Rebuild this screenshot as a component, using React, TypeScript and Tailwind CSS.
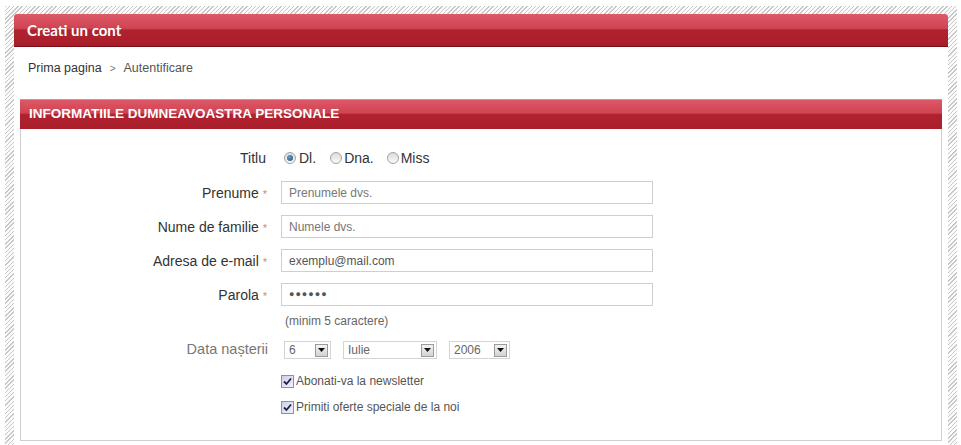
const arial = "font-['Liberation_Sans',Arial,sans-serif]";

function Radio({ checked }: { checked?: boolean }) {
  return (
    <span className="relative inline-flex h-[12px] w-[12px] items-center justify-center rounded-full border border-[#a3a3a3] bg-[linear-gradient(#dcdcdc,#fafafa)]">
      {checked && (
        <span className="h-[6px] w-[6px] rounded-full bg-[radial-gradient(circle_at_35%_35%,#6a9cc4,#1d4f7c)]" />
      )}
    </span>
  );
}

function Checkbox() {
  return (
    <span className="inline-flex h-[13px] w-[13px] items-center justify-center border border-[#8e8fa8] bg-[linear-gradient(135deg,#cfcfee,#f0f0fb)]">
      <svg width="9" height="9" viewBox="0 0 9 9">
        <path d="M1 4.5 L3.5 7 L8 1.5" stroke="#1f2440" strokeWidth="1.8" fill="none" />
      </svg>
    </span>
  );
}

function Select({ value, width }: { value: string; width: string }) {
  return (
    <div className={`flex h-[18px] items-center justify-between border border-[#d4d4d4] bg-white pl-[4px] pr-[2px] ${width}`}>
      <span className="text-[12px] leading-none text-[#666]">{value}</span>
      <span className="flex h-[13px] w-[13px] items-center justify-center border border-[#9a9a9a] bg-[linear-gradient(#f4f4f4,#d2d2d2)]">
        <svg width="7" height="4" viewBox="0 0 7 4">
          <path d="M0 0 H7 L3.5 4 Z" fill="#111" />
        </svg>
      </span>
    </div>
  );
}

function Field({ label, value, dark }: { label: string; value: string; dark?: boolean }) {
  return (
    <div className="flex h-[23px] items-center">
      <div className="w-[246px] pt-[2px] text-right text-[14px] text-[#333]">
        {label} <span className="text-[11px] text-[#c98a8a]">*</span>
      </div>
      <div className="ml-[14px] flex h-[23px] w-[372px] items-center border border-[#cfcfcf] bg-white px-[7px] pt-[1px]">
        <span className={`text-[12px] ${dark ? "text-[#555]" : "text-[#777]"}`}>{value}</span>
      </div>
    </div>
  );
}

export default function App() {
  return (
    <div className={`h-[445px] w-[961px] overflow-hidden bg-white pl-[5px] pt-[6px] ${arial}`}>
      <div className="w-[952px] bg-[repeating-linear-gradient(135deg,#c8c8c8_0px,#c8c8c8_1px,#fbfbfb_1px,#fbfbfb_3px)] px-[9px] pt-[8px] pb-[20px]">
        <div className="w-[934px] bg-white pb-[20px]">
          {/* page title */}
          <div className="flex h-[33px] items-center rounded-t-[3px] border-b border-[#7a0f19] bg-[linear-gradient(#dd5a68,#cf4352_45%,#b1222f_50%,#a91d2b)] pl-[13px]">
            <span className="font-['Lato',sans-serif] text-[15px] font-bold text-white">Creati un cont</span>
          </div>

          <div className="flex h-[42px] items-center pl-[14px] pt-[1px] text-[12.5px] text-[#333]">
            <span>Prima pagina</span>
            <span className="mx-[8px] text-[10px] text-[#777]">&gt;</span>
            <span className="text-[#555]">Autentificare</span>
          </div>

          <div className="ml-[6px] mt-[10px] w-[922px] border border-t-0 border-[#cfcfcf] pb-[25px]">
            <div className="-mx-px flex h-[30px] items-center border-t border-[#e58891] bg-[linear-gradient(#dd5867,#cf4352_45%,#b1222f_50%,#aa1e2c)] pl-[9px]">
              <span className="text-[13.5px] font-bold text-white">INFORMATIILE DUMNEAVOASTRA PERSONALE</span>
            </div>

            <div className="mt-[19px] flex h-[20px] items-center text-[14px] text-[#333]">
              <div className="w-[245px] text-right">Titlu</div>
              <div className="ml-[18px] flex items-center">
                <Radio checked />
                <span className="ml-[3px]">Dl.</span>
                <span className="ml-[14px] flex items-center">
                  <Radio />
                  <span className="ml-[2px]">Dna.</span>
                </span>
                <span className="ml-[13px] flex items-center">
                  <Radio />
                  <span className="ml-[2px]">Miss</span>
                </span>
              </div>
            </div>

            <div className="mt-[13px] flex flex-col gap-[11px]">
              <Field label="Prenume" value="Prenumele dvs." />
              <Field label="Nume de familie" value="Numele dvs." />
              <Field label="Adresa de e-mail" value="exemplu@mail.com" dark />
              <div className="flex h-[23px] items-center">
                <div className="w-[246px] pt-[2px] text-right text-[14px] text-[#333]">
                  Parola <span className="text-[11px] text-[#c98a8a]">*</span>
                </div>
                <div className="ml-[14px] flex h-[23px] w-[372px] items-center border border-[#cfcfcf] bg-white px-[7px]">
                  <span className="text-[9px] tracking-[1px] text-[#555]">●●●●●●</span>
                </div>
              </div>
            </div>

            <div className="ml-[264px] mt-[7px] h-[16px] text-[12px] leading-[16px] text-[#666]">(minim 5 caractere)</div>

            <div className="mt-[12px] flex h-[18px] items-center">
              <div className="w-[247px] text-right text-[14.5px] text-[#777]">Data nașterii</div>
              <div className="ml-[16px] flex items-center gap-[12px]">
                <Select value="6" width="w-[47px]" />
                <Select value="Iulie" width="w-[94px]" />
                <Select value="2006" width="w-[61px]" />
              </div>
            </div>

            <div className="ml-[260px] mt-[14px] flex h-[16px] items-center gap-[2px] text-[12px] text-[#555]">
              <Checkbox />
              <span>Abonati-va la newsletter</span>
            </div>
            <div className="ml-[260px] mt-[10px] flex h-[16px] items-center gap-[2px] text-[12px] text-[#555]">
              <Checkbox />
              <span>Primiti oferte speciale de la noi</span>
            </div>
          </div>
        </div>
      </div>
    </div>
  );
}
